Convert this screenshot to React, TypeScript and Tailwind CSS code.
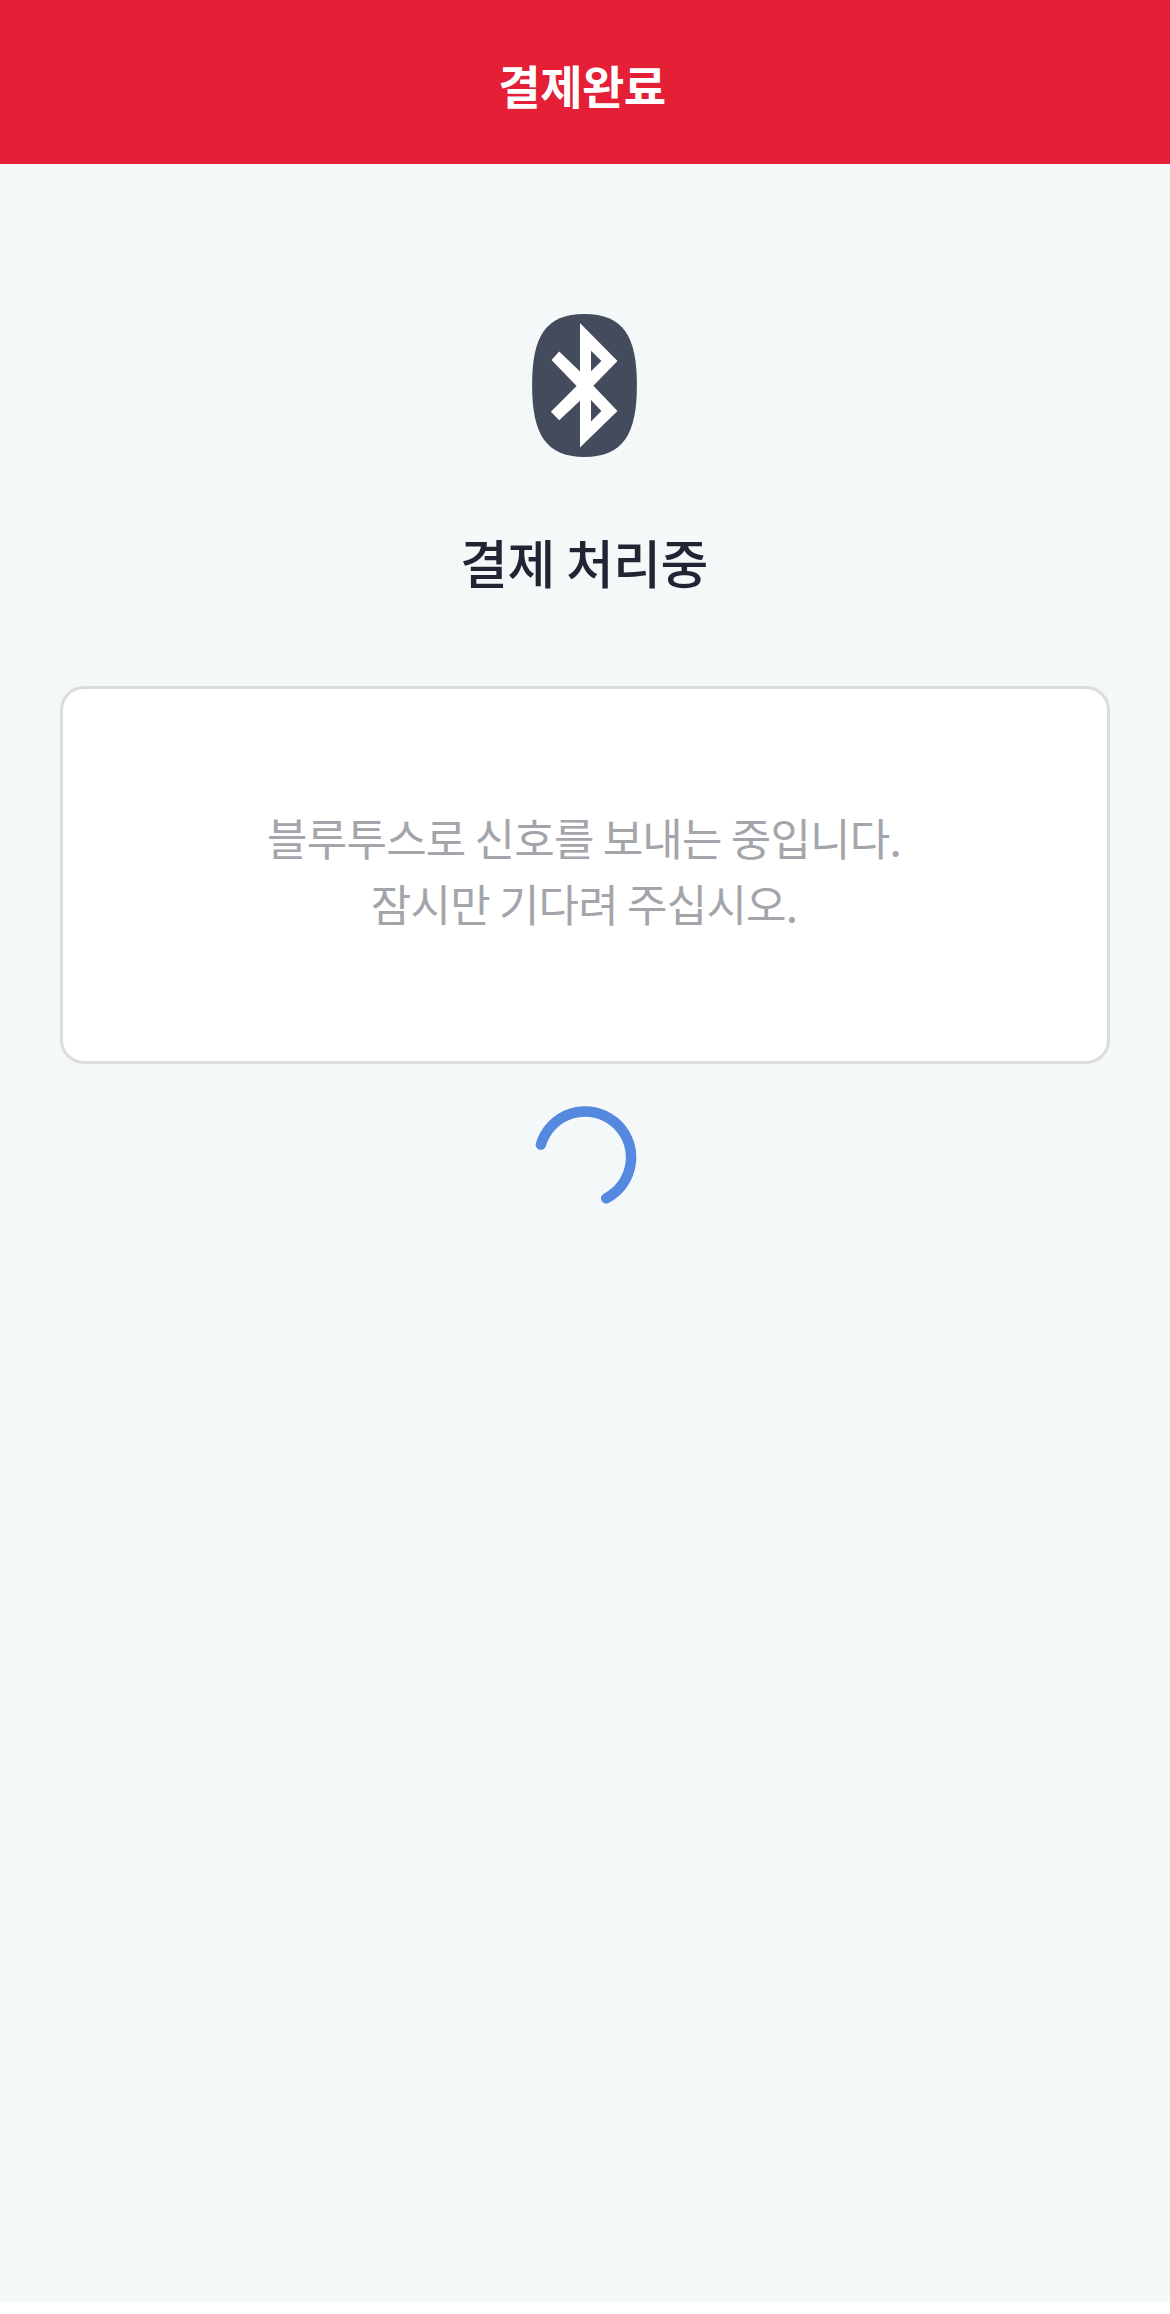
const FONT = "font-['Noto_Sans_CJK_KR','Noto_Sans',sans-serif]";

function BluetoothIcon() {
  return (
    <svg viewBox="157 103 313 427" className="h-[143px] w-[105px]">
      <path
        d="M313 103C430 103 470 170 470 316C470 460 430 530 313 530C197 530 157 460 157 316C157 170 197 103 313 103Z"
        fill="#434b5c"
      />
      <path
        fillRule="evenodd"
        fill="#ffffff"
        d="M300 130L412 243L340 317L412 393L300 502L300 362L238 420L213 395L290 318L215 240L238 215L300 275ZM333 213L364 243L333 274ZM333 360L364 393L333 424Z"
      />
    </svg>
  );
}

function Spinner() {
  return (
    <svg viewBox="0 0 102 102" className="h-[102px] w-[102px]">
      <path
        d="M5.9 38.6A46 46 0 1 1 71.2 92.3"
        fill="none"
        stroke="#5589e0"
        strokeWidth="10.5"
        strokeLinecap="round"
      />
    </svg>
  );
}

export default function App() {
  return (
    <div className={`${FONT} min-h-[2314px] bg-white`}>
      <div className="flex h-[2302px] flex-col items-center bg-[#f4f8f9]">
        <header className="flex h-[164px] w-full items-center justify-center bg-[#e41f36] pr-[6px] pt-[4px]">
          <h1 className="text-[46px] font-bold leading-none tracking-[-0.5px] text-white">결제완료</h1>
        </header>
        <div className="mt-[150px] pr-[1px]">
          <BluetoothIcon />
        </div>
        <h2 className="mt-[69px] pr-[2px] text-[52px] font-medium leading-[72px] tracking-[-0.5px] text-[#1f2533]">결제 처리중</h2>
        <div className="mt-[88px] flex h-[378px] w-[1050px] flex-col items-center justify-center rounded-[24px] border-[3px] border-[#dcdcdc] bg-white pb-[10px]">
          <p className="pr-[2px] text-center text-[44px] font-normal leading-[66px] tracking-[-0.8px] text-[#a3a5ab]">
            블루투스로 신호를 보내는 중입니다.
            <br />
            잠시만 기다려 주십시오.
          </p>
        </div>
        <div className="ml-[1px] mt-[42px]">
          <Spinner />
        </div>
      </div>
    </div>
  );
}
